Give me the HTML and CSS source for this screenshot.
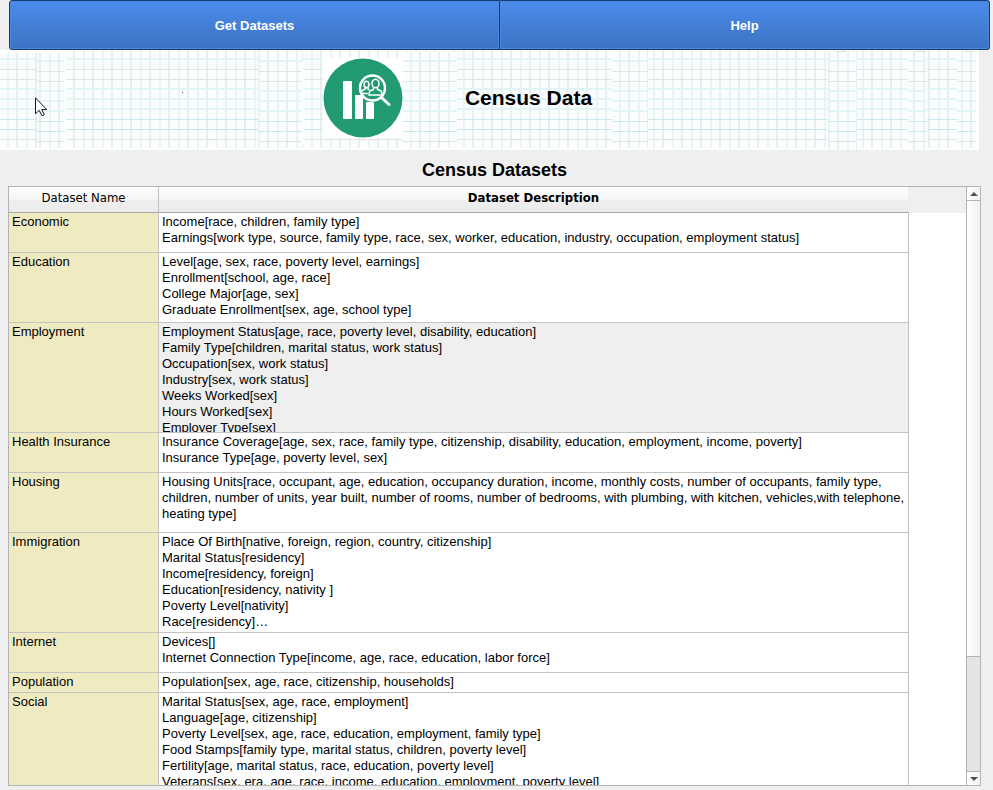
FILE: index.html
```html
<!DOCTYPE html>
<html lang="en">
<head>
<meta charset="utf-8">
<title>Census Data</title>
<link rel="stylesheet" href="styles.css">
</head>
<body>
<nav class="toolbar">
  <button type="button" class="tool">Get Datasets</button>
  <button type="button" class="tool">Help</button>
</nav>

<header class="banner">
  <svg class="paper" viewBox="0 0 979 100" preserveAspectRatio="xMinYMin slice" aria-hidden="true">
    <defs>
      <pattern id="square" width="19" height="100" patternUnits="userSpaceOnUse">
        <rect width="19" height="100" fill="#fcfefe"/>
        <path d="M0 5h19M0 14h19M0 34h19M0 44h19M0 54h19M0 64h19M0 75h19" stroke="#f4fbfb"/>
        <path d="M7 0h2v100h-2z" fill="#e9f5f4"/>
        <path d="M16 0h2v100h-2z" fill="#e6f0ef"/>
        <path d="M0 9h19M0 39h19M0 49h19M0 59h19" stroke="#e2f4f6" stroke-width="2"/>
        <path d="M0 19.500h19M0 29.500h19" stroke="#dce5e9"/>
        <path d="M0 69.500h19M0 79.500h19" stroke="#cbe7ee"/>
        <path d="M0 89.500h19" stroke="#dde3ea"/>
      </pattern>
      <pattern id="shifted" href="#square" patternTransform="translate(4 2)"/>
    </defs>
    <rect width="979" height="100" fill="#fff"/>
    <rect width="972" height="98" fill="url(#square)"/>
    <rect x="37" y="3" width="28" height="95" fill="url(#shifted)"/>
    <rect x="258" y="0" width="44" height="98" fill="url(#shifted)"/>
    <rect x="402" y="2" width="55" height="96" fill="url(#shifted)"/>
    <rect x="612" y="0" width="36" height="98" fill="url(#shifted)"/>
    <rect x="828" y="1" width="29" height="99" fill="url(#shifted)"/>
    <rect x="908" y="1" width="19" height="99" fill="url(#shifted)"/>
    <rect x="957" y="1" width="19" height="97" fill="url(#shifted)"/>
    <path d="M0 1.500h60M65.500 0v98M302.500 12v82" stroke="#fff" stroke-width="2"/>
    <path d="M835 1.500h11M915 1.500h11M964 1.500h11" stroke="#dfe2e4"/>
    <path d="M182 42h1v1h-1z" fill="#444"/>
  </svg>
  <div class="brand">
    <svg class="logo" viewBox="0 0 80 80" role="img" aria-label="Census logo">
      <rect width="80" height="80" fill="#fff"/>
      <circle cx="40" cy="40" r="39.500" fill="#229a74"/>
      <g fill="#fff">
        <rect x="20" y="23" width="9" height="38" rx="1"/>
        <rect x="32" y="37" width="8" height="24" rx="1"/>
        <rect x="43" y="44" width="8" height="17" rx="1"/>
      </g>
      <circle cx="49.500" cy="30" r="12.500" fill="#229a74" stroke="#fff" stroke-width="2.500"/>
      <path d="M58.500 39.500l7.500 7" stroke="#fff" stroke-width="3" stroke-linecap="round"/>
      <g fill="none" stroke="#fff" stroke-width="1.500">
        <ellipse cx="52.500" cy="25.500" rx="3.500" ry="4.300"/>
        <path d="M50.500 29.500v2l-3.500 1.500q-1 1-1 4h13q0-3-1-4l-3.500-1.500v-2"/>
        <ellipse cx="43.500" cy="26.500" rx="2.400" ry="3.200"/>
        <path d="M42.300 29.500v1.500l-3 1.500q-1 1-1 3h6.500M45 29.500v1.500l1.500 1"/>
      </g>
    </svg>
    <h1 class="brand-name">Census Data</h1>
  </div>
  <svg class="pointer" viewBox="0 0 13 20" aria-hidden="true">
    <path d="M.5 .8v16l3.700-3.500 2.800 5.500 2.300-1-2.600-5.300h5z" fill="#fff" stroke="#161625"/>
  </svg>
</header>

<main class="content">
  <h2 class="heading">Census Datasets</h2>
  <div class="panel">
    <div class="viewport">
      <table class="datasets">
        <thead>
          <tr><th class="name" scope="col">Dataset Name</th><th class="about" scope="col">Dataset Description</th><td class="spare"></td></tr>
        </thead>
        <tbody>
          <tr><th scope="row">Economic</th><td><div class="lines h2">Income[race, children, family type]<br>Earnings[work type, source, family type, race, sex, worker, education, industry, occupation, employment status]</div></td></tr>
          <tr><th scope="row">Education</th><td><div class="lines h4">Level[age, sex, race, poverty level, earnings]<br>Enrollment[school, age, race]<br>College Major[age, sex]<br>Graduate Enrollment[sex, age, school type]</div></td></tr>
          <tr class="current"><th scope="row">Employment</th><td><div class="lines h7">Employment Status[age, race, poverty level, disability, education]<br>Family Type[children, marital status, work status]<br>Occupation[sex, work status]<br>Industry[sex, work status]<br>Weeks Worked[sex]<br>Hours Worked[sex]<br>Employer Type[sex]</div></td></tr>
          <tr><th scope="row">Health Insurance</th><td><div class="lines h2">Insurance Coverage[age, sex, race, family type, citizenship, disability, education, employment, income, poverty]<br>Insurance Type[age, poverty level, sex]</div></td></tr>
          <tr><th scope="row">Housing</th><td><div class="lines h3">Housing Units[race, occupant, age, education, occupancy duration, income, monthly costs, number of occupants, family type,<br>children, number of units, year built, number of rooms, number of bedrooms, with plumbing, with kitchen, vehicles,with telephone,<br>heating type]</div></td></tr>
          <tr><th scope="row">Immigration</th><td><div class="lines h6">Place Of Birth[native, foreign, region, country, citizenship]<br>Marital Status[residency]<br>Income[residency, foreign]<br>Education[residency, nativity ]<br>Poverty Level[nativity]<br>Race[residency]…</div></td></tr>
          <tr><th scope="row">Internet</th><td><div class="lines h2">Devices[]<br>Internet Connection Type[income, age, race, education, labor force]</div></td></tr>
          <tr><th scope="row">Population</th><td><div class="lines h1">Population[sex, age, race, citizenship, households]</div></td></tr>
          <tr><th scope="row">Social</th><td><div class="lines h7">Marital Status[sex, age, race, employment]<br>Language[age, citizenship]<br>Poverty Level[sex, age, race, education, employment, family type]<br>Food Stamps[family type, marital status, children, poverty level]<br>Fertility[age, marital status, race, education, poverty level]<br>Veterans[sex, era, age, race, income, education, employment, poverty level]</div></td></tr>
        </tbody>
      </table>
    </div>
    <div class="scrollbar">
      <button type="button" class="step" aria-label="Scroll up"><svg viewBox="0 0 8 4"><path d="M4 0l4 4H0z"/></svg></button>
      <div class="track"><div class="thumb"></div></div>
      <button type="button" class="step down" aria-label="Scroll down"><svg viewBox="0 0 8 4"><path d="M0 0h8L4 4z"/></svg></button>
    </div>
  </div>
</main>
</body>
</html>
```
FILE: styles.css
```css
* { box-sizing: border-box; }

body {
  margin: 0;
  height: 100vh;
  display: flex;
  flex-direction: column;
  overflow: hidden;
  background: #efefef;
  color: #000;
  font: 13px/16px "Liberation Sans", Arial, sans-serif;
}

.toolbar {
  display: flex;
  flex: none;
  margin: 0 3px 0 9px;
  height: 50px;
}

.tool {
  flex: 1;
  padding: 2px 6px 0;
  border: 1px solid #153a76;
  border-radius: 3px;
  background: linear-gradient(#4a8ceb, #3c73c3);
  box-shadow: inset 0 0 0 1px #4b87dd;
  color: #fff;
  font: bold 13px/16px "Liberation Sans", Arial, sans-serif;
}

.tool:first-child {
  border-top-right-radius: 0;
  border-bottom-right-radius: 0;
}

.tool:last-child {
  border-left: 0;
  border-top-left-radius: 0;
  border-bottom-left-radius: 0;
}

.banner {
  position: relative;
  flex: none;
  height: 100px;
  margin-right: 14px;
  overflow: hidden;
  background: #fff;
}

.paper {
  position: absolute;
  inset: 0;
  width: 100%;
  height: 100%;
}

.brand {
  position: relative;
  display: flex;
  align-items: center;
  justify-content: center;
  gap: 62px;
  height: 96px;
  padding-right: 64px;
}

.logo {
  width: 80px;
  height: 80px;
}

.brand-name {
  margin: 0;
  font-size: 21px;
  line-height: 28px;
}

.pointer {
  position: absolute;
  left: 35px;
  top: 47px;
  width: 13px;
  height: 20px;
}

.content {
  flex: 1;
  min-height: 0;
  display: flex;
  flex-direction: column;
  padding: 8px 12px 4px 8px;
}

.heading {
  margin: 0 0 4px;
  font-size: 18px;
  line-height: 24px;
  text-align: center;
}

.panel {
  flex: 1;
  min-height: 0;
  display: flex;
  border: 1px solid #b4b4b4;
  background: #fff;
}

.viewport {
  flex: 1;
  overflow: hidden;
}

.datasets {
  width: 100%;
  table-layout: fixed;
  border-collapse: separate;
  border-spacing: 0;
}

.datasets th,
.datasets td {
  padding: 0;
  vertical-align: top;
}

.datasets thead th {
  height: 26px;
  border-right: 1px solid #c3c3c3;
  border-bottom: 1px solid #a8a8a8;
  background: linear-gradient(#fdfdfd, #f5f5f5 50%, #efefef 50%, #ebebeb);
  font: 13px/22px "DejaVu Sans Condensed", "DejaVu Sans", sans-serif;
  text-align: center;
}

.datasets thead .name { width: 150px; }

.datasets thead .about {
  border-right-color: #efefef;
  font-weight: bold;
}

.datasets thead .spare {
  width: 57px;
  background: #efefef;
}

.datasets tbody th,
.datasets tbody td {
  border-right: 1px solid #c3c3c3;
  border-bottom: 1px solid #c3c3c3;
}

.datasets tbody th {
  padding: 1px 3px;
  background: #f0eac0;
  font-weight: normal;
  text-align: left;
}

.datasets .current td { background: #efefef; }

.lines {
  padding: 1px 3px;
  overflow: hidden;
  white-space: nowrap;
}

.h1 { height: 19px; }
.h2 { height: 39px; }
.h3 { height: 59px; }
.h4 { height: 69px; }
.h6 { height: 99px; }
.h7 { height: 109px; }

.scrollbar {
  display: flex;
  flex-direction: column;
  width: 14px;
  border-left: 1px solid #b4b4b4;
}

.step {
  display: flex;
  align-items: center;
  justify-content: center;
  flex: none;
  height: 14px;
  padding: 0;
  border: 0;
  border-bottom: 1px solid #b4b4b4;
  background: linear-gradient(90deg, #fff, #f3f3f3);
}

.step.down {
  border-top: 1px solid #b4b4b4;
  border-bottom: 0;
}

.step svg {
  width: 8px;
  height: 4px;
  fill: #505050;
}

.track {
  flex: 1;
  background: #e4e4e4;
}

.thumb {
  height: 80%;
  border-bottom: 1px solid #b4b4b4;
  background: linear-gradient(90deg, #fff, #f0f0f0);
}
```
